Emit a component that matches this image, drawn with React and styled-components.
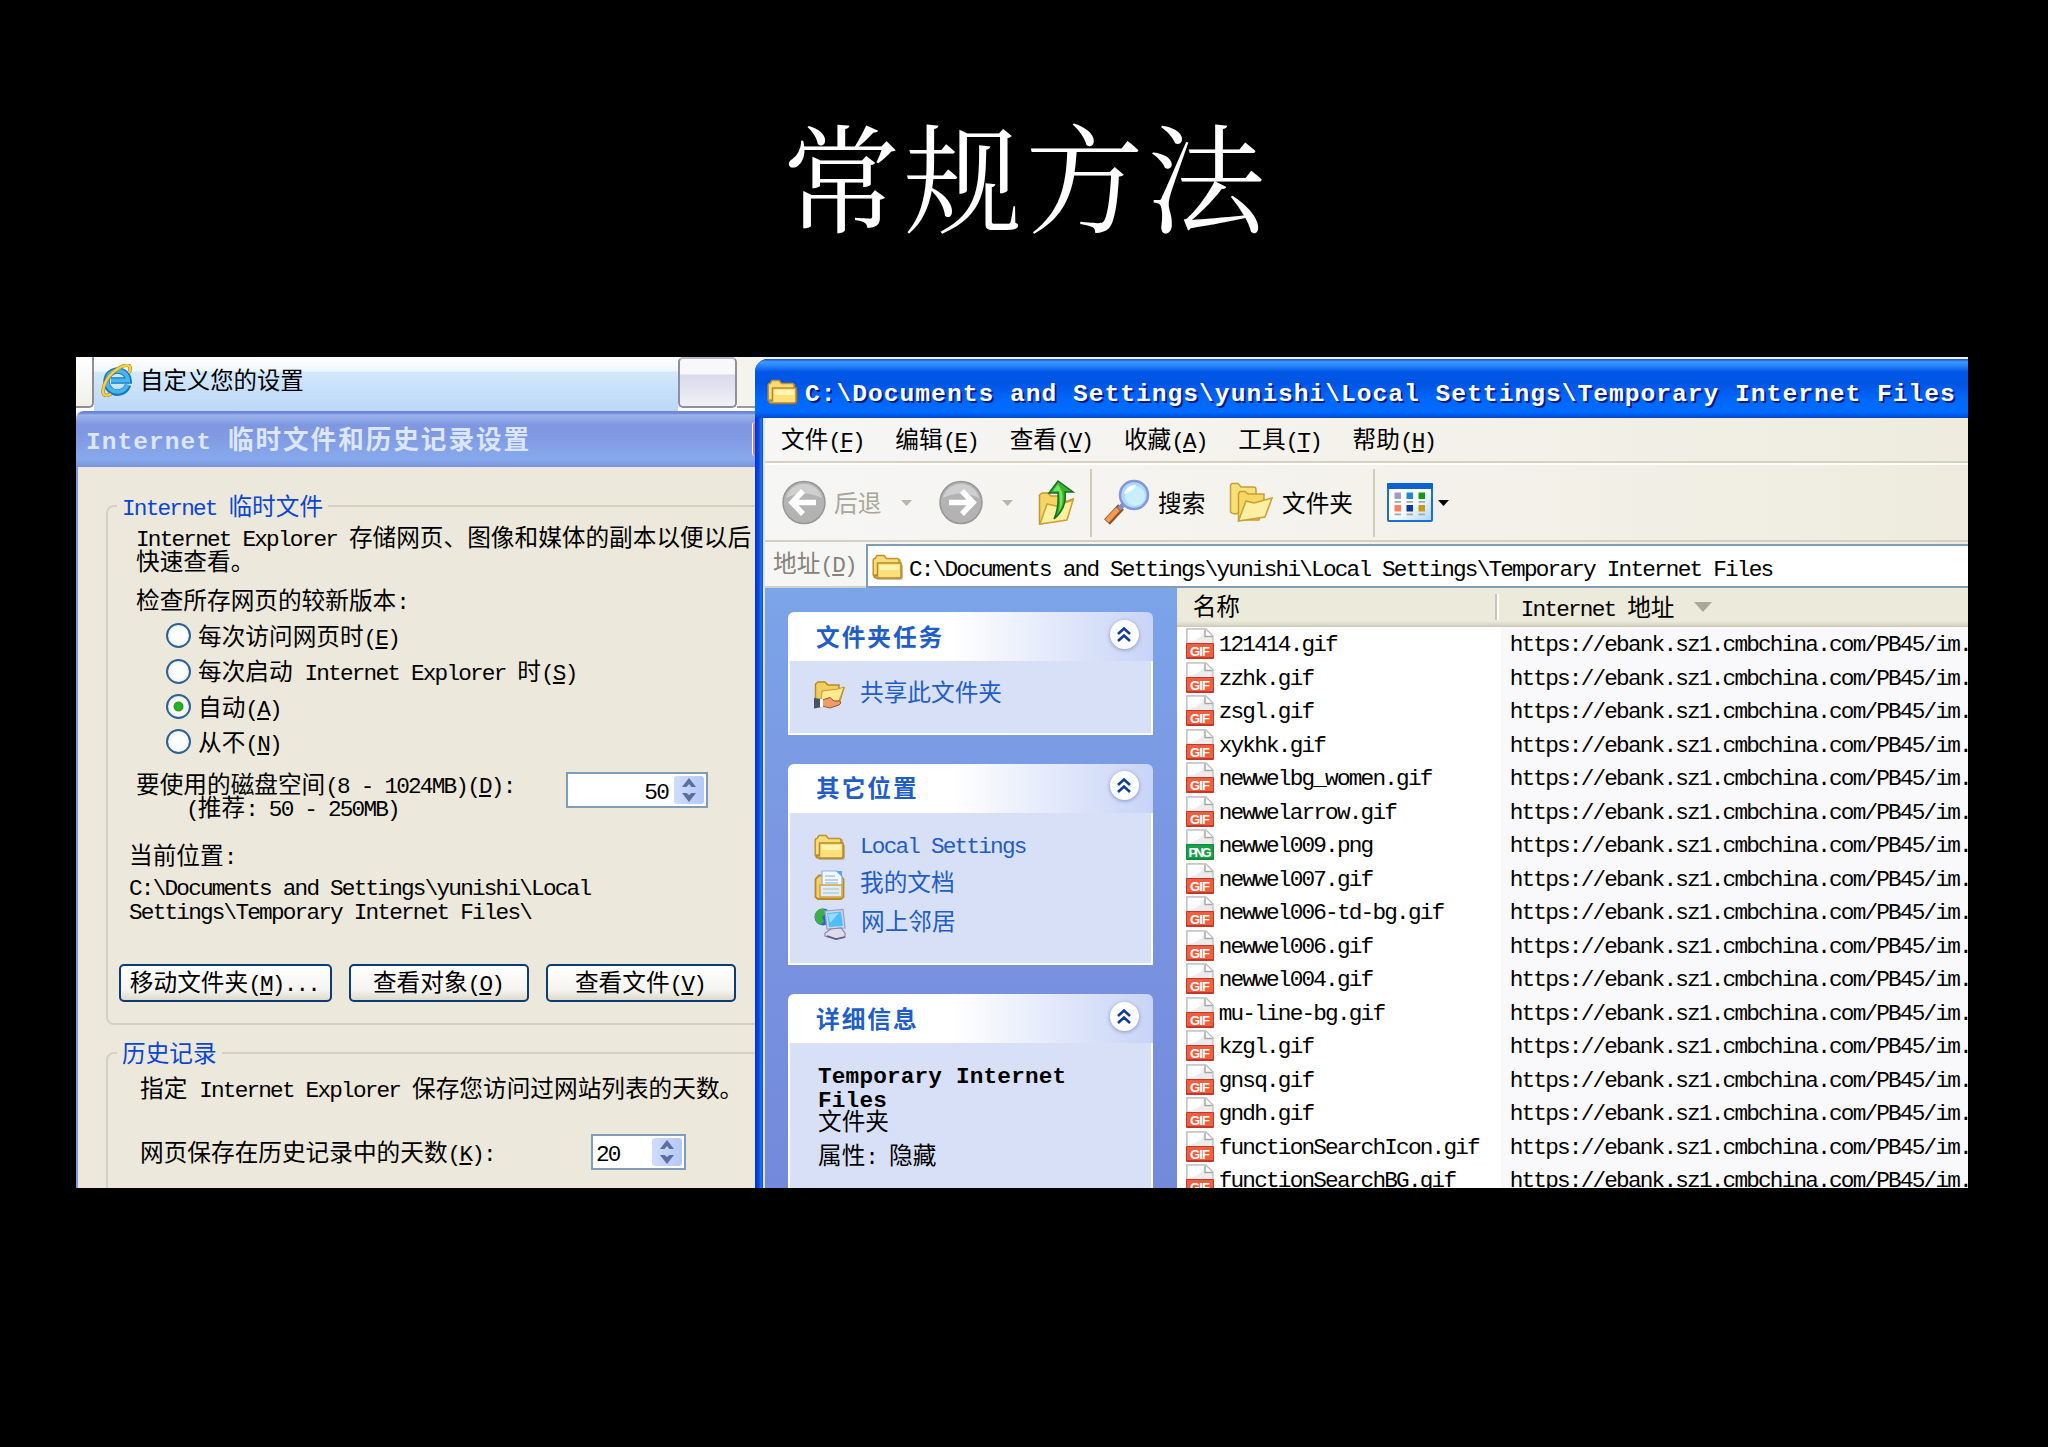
import React from 'react';
import styled, { createGlobalStyle, css } from 'styled-components';

const URL_TEXT = 'https://ebank.sz1.cmbchina.com/PB45/im.';

const files = [
    '121414.gif',
    'zzhk.gif',
    'zsgl.gif',
    'xykhk.gif',
    'newwelbg_women.gif',
    'newwelarrow.gif',
    'newwel009.png',
    'newwel007.gif',
    'newwel006-td-bg.gif',
    'newwel006.gif',
    'newwel004.gif',
    'mu-line-bg.gif',
    'kzgl.gif',
    'gnsq.gif',
    'gndh.gif',
    'functionSearchIcon.gif',
    'functionSearchBG.gif',
];

const menus = ['文件(&F)', '编辑(&E)', '查看(&V)', '收藏(&A)', '工具(&T)', '帮助(&H)'];

const versions = [
    { label: '每次访问网页时(&E)' },
    { label: '每次启动 Internet Explorer 时(&S)' },
    { label: '自动(&A)', checked: true },
    { label: '从不(&N)' },
];

// half-width runs take a fixed advance, "&X" marks the access key
const LATIN = 0.96;

function Txt({ children, size = 23.66, advance = 11.83, bold }) {
    const runs = children.split(/([\x20-\x7e]+)/).filter(Boolean);
    return (
        <>
            {runs.map((run, i) => {
                if (!/^[\x20-\x7e]/.test(run)) return <Cjk key={i} $size={size} $bold={bold}>{run}</Cjk>;
                const [head, tail] = run.split('&');
                return (
                    <Latin key={i} $size={size} $advance={advance} $bold={bold}>
                        {head}{tail && <u>{tail[0]}</u>}{tail && tail.slice(1)}
                    </Latin>
                );
            })}
        </>
    );
}

function FolderIcon({ w = 31, h = 26 }) {
    return (
        <svg width={w} height={h} viewBox="0 0 31 26">
            <path d="M3 23 L1 20 V6 Q1 4 3 4 L5 1.5 H12 L14.500 4 H26 Q28 4 28 6 V10 H30 V23 Q30 25 28 25 H5 Q3 25 3 23Z" fill="#8a6a24" opacity=".55" transform="translate(.8 .8)"/>
            <path d="M1.200 21 V6 Q1.200 4.500 3 4.500 L5 1.500 H12 L14.500 4.500 H25 Q27 4.500 27 6.500 V21Z" fill="#f7dc7c" stroke="#c1912c" strokeWidth="1.500"/>
            <path d="M5.500 9 H29 V22 Q29 24 27 24 H4 Q2 24 2 22 H5.500Z" fill="#fbe07c" stroke="#b98826" strokeWidth="1.500"/>
            <path d="M7.500 11 H27 V16 H7.500Z" fill="#fff3b0"/>
        </svg>
    );
}

function DocsIcon() {
    return (
        <svg width="31" height="30" viewBox="0 0 31 30">
            <path d="M1.500 27 V9 L5 5.500 H26 L29.500 9 V27 L27 29 H4Z" fill="#f3d06a" stroke="#b98a2b" strokeWidth="1.800"/>
            <path d="M8 1 H23 L28 6 V18 H8Z" fill="#f2f8ff" stroke="#8fb0dc" strokeWidth="1.200"/>
            <path d="M22 1 H28 V7Z" fill="#59a7f2"/>
            <path d="M11 6h10M11 10h13M11 13h13" stroke="#a9c4e6" strokeWidth="1.400"/>
            <path d="M6 15 H28 V27 H6Z" fill="#e0edf3" stroke="#d0a544" strokeWidth="1.500"/>
            <path d="M9 19h16M9 23h16" stroke="#a6bfc9" strokeWidth="1.200"/>
        </svg>
    );
}

function NetworkIcon() {
    return (
        <svg width="32" height="32" viewBox="0 0 32 32">
            <circle cx="9" cy="9" r="8.500" fill="#2568c8"/>
            <path d="M1 6 Q4 0 10 1 L13 5 L8 9 L10 14 L6 17 Q0 14 1 6Z" fill="#3fae48"/>
            <path d="M11 3 L29 1.500 L31 20 L13 21Z" fill="#cfd6ee" stroke="#9b9cc0" strokeWidth="1.200"/>
            <path d="M13 5 L27 3.500 L29 18 L15 19Z" fill="#4fbcfb"/>
            <path d="M14 6 L25 5 L16 15Z" fill="#97dcff"/>
            <path d="M17 21 L27 20 L31 25 V29 L22 31.500 L11 28 V25Z" fill="#dcdcec" stroke="#8a86ac" strokeWidth="1.200"/>
            <path d="M13 28 L22 31 L31 29" fill="none" stroke="#5f5a80" strokeWidth="1.500"/>
        </svg>
    );
}

function ShareIcon() {
    return (
        <svg width="31" height="29" viewBox="0 0 31 29">
            <path d="M1.500 21 V3 L4 1 H11 L14 4 H25 V9 L30 7 L25 22 H3Z" fill="#f1cf5d" stroke="#b78a25" strokeWidth="1.500"/>
            <path d="M8 10 L24 8 L30 6 L25 20 L7 21Z" fill="#fdea93" stroke="#c99a2e" strokeWidth="1"/>
            <path d="M8 19 L16 16.500 L20 20 H26 Q28 22 25 24 L16 27 L8 25Z" fill="#ee9d64" stroke="#9c5526" strokeWidth="1"/>
            <path d="M0 17 L8 18 V26 L0 27.500Z" fill="#4a5262"/>
            <path d="M6 18 H9 V26 H6Z" fill="#fff"/>
        </svg>
    );
}

function IeIcon() {
    return (
        <svg width="31" height="33" viewBox="0 0 31 33">
            <path d="M27 21 A11 11 0 1 1 27.500 16.500 H10" fill="none" stroke="#1577c0" strokeWidth="6.500"/>
            <path d="M26.500 20.500 A10.500 10.500 0 1 1 27 16.500 H10" fill="none" stroke="#45b5ee" strokeWidth="4"/>
            <path d="M10 30 Q2 34 2 27 Q3 16 13 7.500 Q24 -1 28.500 2 Q30 4 28 9" fill="none" stroke="#b07d18" strokeWidth="3.600"/>
            <path d="M10 30 Q2 34 2 27 Q3 16 13 7.500 Q24 -1 28.500 2 Q30 4 28 9" fill="none" stroke="#f8cf45" strokeWidth="2.400"/>
        </svg>
    );
}

function RoundArrow({ flip }) {
    return (
        <svg width="44" height="45" viewBox="0 0 44 45">
            <circle cx="22" cy="22.500" r="21" fill="#b3b3b3" stroke="#979797" strokeWidth="1.500"/>
            <path d="M4 18 A18.500 18.500 0 0 1 40 18 Q22 9 4 18Z" fill="#cfcfcf"/>
            <g transform={flip ? 'translate(44 0) scale(-1 1)' : undefined}>
                <path d="M21 11 L10 22.500 L21 34 M11 22.500 H34" fill="none" stroke="#fff" strokeWidth="5.500"/>
            </g>
        </svg>
    );
}

function UpIcon() {
    return (
        <svg width="37" height="46" viewBox="0 0 37 46">
            <path d="M1.500 44 V15 L4 13 H10 L13 16 H27 V22 L35 19 L29 39 Z" fill="#f4d566" stroke="#c2972c" strokeWidth="1.500"/>
            <path d="M2 44 L9 24 L18 26 L35 20 L29 40Z" fill="#fdf0a0" stroke="#cda136" strokeWidth="1.500"/>
            <path d="M20 1 L35 12 H27 Q29 28 16 39 Q21 28 20 13 H11Z" fill="#35b52e" stroke="#15701a" strokeWidth="1.500"/>
            <path d="M20 4 L24 12 Q26 24 21 32 Q23 22 21 11 L15 11Z" fill="#7be066"/>
        </svg>
    );
}

function SearchIcon() {
    return (
        <svg width="46" height="47" viewBox="0 0 46 47">
            <path d="M3 43 L17 28" stroke="#8a4f2c" strokeWidth="8"/>
            <path d="M3 42 L14 30" stroke="#f39a50" strokeWidth="5"/>
            <path d="M15 30 L20 25" stroke="#8d8fa8" strokeWidth="5"/>
            <circle cx="30" cy="16" r="14" fill="#a9dcff" stroke="#8794d6" strokeWidth="2.500"/>
            <circle cx="31" cy="17" r="10" fill="#c9efff"/>
            <path d="M20 15 Q22 6 32 6 Q30 12 20 15Z" fill="#fff"/>
        </svg>
    );
}

function FoldersIcon() {
    return (
        <svg width="44" height="41" viewBox="0 0 44 41">
            <path d="M1.500 30 V3 L3 1.500 H9 L12 5 H25 Q27 5 27 8 V14 L10 31 Q4 33 1.500 30Z" fill="#f8e079" stroke="#c99e35" strokeWidth="1.500"/>
            <path d="M9.500 38 V12 L11 9.500 H16 L19 12 H35 V17 L30 38Z" fill="#f6d766" stroke="#c99e35" strokeWidth="1.500"/>
            <path d="M9.500 39 L17 19 L25 21 L43 16 L36 35 Z" fill="#fdf0a2" stroke="#c99e35" strokeWidth="1.500"/>
        </svg>
    );
}

function ViewsIcon() {
    const cells = ['#a29bc8', '#1f86e0', '#109a10', '#ff7f60', '#0a3a9a', '#c99a10'];
    return (
        <svg width="46" height="39" viewBox="0 0 46 39">
            <defs>
                <linearGradient id="views" x1="0" y1="0" x2="1" y2="1">
                    <stop offset=".5" stopColor="#fff"/>
                    <stop offset="1" stopColor="#a9d6fb"/>
                </linearGradient>
            </defs>
            <rect x="1" y="1" width="44" height="37" rx="1" fill="url(#views)" stroke="#1a70d2" strokeWidth="2"/>
            <rect width="46" height="6" rx="1" fill="#0c62cf"/>
            {cells.map((c, i) => (
                <g key={c} transform={`translate(${7.500 + (i % 3) * 12} ${9.500 + Math.floor(i / 3) * 12.500})`}>
                    <rect width="6.500" height="6.500" fill={c}/>
                    <rect y="8.500" width="6.500" height="1.800" fill="#a7a9ad"/>
                </g>
            ))}
        </svg>
    );
}

function FileIcon({ type }) {
    const png = type === 'png';
    return (
        <svg width="28" height="31" viewBox="0 0 28 31">
            <path d="M.8 30 V.8 H20 L27 8 V30Z" fill="#ececec" stroke="#b9b9b9" strokeWidth="1.200"/>
            <path d="M2 2 H18 Q17 11 2 14Z" fill="#fff"/>
            <path d="M19 1.500 V8.500 H26.500" fill="#fff" stroke="#a6a6a6" strokeWidth="1.400"/>
            <rect y="15" width="28" height="16" rx="1" fill={png ? '#128a3a' : '#c8352a'}/>
            <rect x="1" y="16" width="26" height="13" fill={png ? '#19a04a' : '#ee5f3d'}/>
            <text x="14" y="27.500" textAnchor="middle" textLength={png ? 23 : 20} fontFamily="Liberation Sans, sans-serif" fontWeight="700" fontSize="13" fill="#fff">
                {png ? 'PNG' : 'GIF'}
            </text>
        </svg>
    );
}

function Triangle({ w = 11, h = 6, color = '#b9b6ac' }) {
    return (
        <svg width={w} height={h} viewBox="0 0 10 6" preserveAspectRatio="none">
            <path d="M0 0H10L5 6Z" fill={color}/>
        </svg>
    );
}

function Collapse() {
    return (
        <Round>
            <svg width="16" height="17" viewBox="0 0 16 17">
                <path d="M2 8 L8 2.500 L14 8 M2 15 L8 9.500 L14 15" fill="none" stroke="#113c9c" strokeWidth="2.600"/>
            </svg>
        </Round>
    );
}

function Spinner({ value, width, align }) {
    return (
        <SpinBox $width={width}>
            <SpinValue $align={align}><Txt>{value}</Txt></SpinValue>
            <SpinArrows>
                <svg width="14" height="24" viewBox="0 0 14 24">
                    <path d="M0 9 L7 0 L14 9 H9.500 L7 6 L4.500 9Z M0 15 L7 24 L14 15 H9.500 L7 17 L4.500 15Z" fill="#5a6f9f"/>
                </svg>
            </SpinArrows>
        </SpinBox>
    );
}

function TaskBox({ title, children, height, gap }) {
    return (
        <Task $height={height} $gap={gap}>
            <TaskHead><Txt bold>{title}</Txt><Collapse/></TaskHead>
            <TaskBody>{children}</TaskBody>
        </Task>
    );
}

function SettingsDialog() {
    return (
        <Left>
            <TabStrip>
                <TabEnd/>
                <ActiveTab><IeIcon/><span><Txt size={23.4}>自定义您的设置</Txt></span></ActiveTab>
                <NewTab/>
                <TabRest/>
            </TabStrip>
            <DialogTitle>
                <span><Txt bold size={25.6} advance={15.77}>Internet 临时文件和历史记录设置</Txt></span>
                <CloseEdge/>
            </DialogTitle>
            <DialogBody>
                <Group $top={26} $height={532}>
                    <legend><Txt>Internet 临时文件</Txt></legend>
                    <Line $top={6} $left={28}><Txt>Internet Explorer 存储网页、图像和媒体的副本以便以后</Txt></Line>
                    <Line $left={28}><Txt>快速查看。</Txt></Line>
                    <Line $top={16} $left={28}><Txt>检查所存网页的较新版本:</Txt></Line>
                    <Radios>
                        {versions.map(v => (
                            <RadioRow key={v.label}><Dot $checked={v.checked}/><span><Txt>{v.label}</Txt></span></RadioRow>
                        ))}
                    </Radios>
                    <DiskRow>
                        <div>
                            <Line><Txt>要使用的磁盘空间(8 - 1024MB)(&D):</Txt></Line>
                            <Line $left={50}><Txt>(推荐: 50 - 250MB)</Txt></Line>
                        </div>
                        <Spinner value="50" width={142} align="right"/>
                    </DiskRow>
                    <Line $top={23} $left={21}><Txt>当前位置:</Txt></Line>
                    <Line $top={8} $left={21}><Txt>C:\Documents and Settings\yunishi\Local</Txt></Line>
                    <Line $left={21}><Txt>Settings\Temporary Internet Files\</Txt></Line>
                    <Buttons>
                        <Button $width={213}><Txt>移动文件夹(&M)...</Txt></Button>
                        <Button $width={180}><Txt>查看对象(&O)</Txt></Button>
                        <Button $width={190}><Txt>查看文件(&V)</Txt></Button>
                    </Buttons>
                </Group>
                <Group $top={15} $height={220}>
                    <legend><Txt>历史记录</Txt></legend>
                    <Line $top={10} $left={32}><Txt>指定 Internet Explorer 保存您访问过网站列表的天数。</Txt></Line>
                    <DaysRow>
                        <Line><Txt>网页保存在历史记录中的天数(&K):</Txt></Line>
                        <Spinner value="20" width={95} align="left"/>
                    </DaysRow>
                </Group>
            </DialogBody>
        </Left>
    );
}

function Explorer() {
    return (
        <Window>
            <Caption>
                <FolderIcon/>
                <span><Txt bold size={25.6} advance={15.77}>C:\Documents and Settings\yunishi\Local Settings\Temporary Internet Files</Txt></span>
            </Caption>
            <Inner>
                <MenuBar>{menus.map(m => <span key={m}><Txt>{m}</Txt></span>)}</MenuBar>
                <Toolbar>
                    <Tool $w={52} $dim><RoundArrow/></Tool>
                    <Tool $w={67} $dim><span><Txt>后退</Txt></span></Tool>
                    <Tool $w={38}><Triangle/></Tool>
                    <Tool $w={63}><RoundArrow flip/></Tool>
                    <Tool $w={36}><Triangle/></Tool>
                    <Tool $w={52}><UpIcon/></Tool>
                    <Separator/>
                    <Tool $w={54}><SearchIcon/></Tool>
                    <Tool $w={71}><span><Txt>搜索</Txt></span></Tool>
                    <Tool $w={53}><FoldersIcon/></Tool>
                    <Tool $w={91}><span><Txt>文件夹</Txt></span></Tool>
                    <Separator/>
                    <Tool $w={51}><ViewsIcon/></Tool>
                    <Tool><Triangle color="#000"/></Tool>
                </Toolbar>
                <AddressBar>
                    <AddressLabel><Txt>地址(&D)</Txt></AddressLabel>
                    <AddressField>
                        <FolderIcon w={33}/>
                        <span><Txt>C:\Documents and Settings\yunishi\Local Settings\Temporary Internet Files</Txt></span>
                    </AddressField>
                </AddressBar>
                <Content>
                    <Sidebar>
                        <TaskBox title="文件夹任务" height={122.5} gap={29}>
                            <TaskLink><ShareIcon/><span><Txt>共享此文件夹</Txt></span></TaskLink>
                        </TaskBox>
                        <TaskBox title="其它位置" height={201} gap={29.5}>
                            <TaskLink><FolderIcon/><span><Txt>Local Settings</Txt></span></TaskLink>
                            <TaskLink><DocsIcon/><span><Txt>我的文档</Txt></span></TaskLink>
                            <TaskLink><NetworkIcon/><span><Txt>网上邻居</Txt></span></TaskLink>
                        </TaskBox>
                        <TaskBox title="详细信息" height={240}>
                            <Details>
                                <Line><Txt bold advance={13.8}>Temporary Internet</Txt></Line>
                                <Line><Txt bold advance={13.8}>Files</Txt></Line>
                                <Line><Txt>文件夹</Txt></Line>
                                <Line $top={10}><Txt>属性: 隐藏</Txt></Line>
                            </Details>
                        </TaskBox>
                    </Sidebar>
                    <List>
                        <ListHead>
                            <HeadName><Txt>名称</Txt></HeadName>
                            <HeadUrl><span><Txt>Internet 地址</Txt></span><Triangle w={18} h={10} color="#aca899"/></HeadUrl>
                        </ListHead>
                        {files.map(name => (
                            <Row key={name}>
                                <NameCell><FileIcon type={name.slice(-3)}/><FileName><Txt>{name}</Txt></FileName></NameCell>
                                <UrlCell><Txt>{URL_TEXT}</Txt></UrlCell>
                            </Row>
                        ))}
                    </List>
                </Content>
            </Inner>
        </Window>
    );
}

export default function App() {
    return (
        <Slide>
            <GlobalStyle/>
            <Title>常规方法</Title>
            <Shot>
                <SettingsDialog/>
                <Explorer/>
            </Shot>
        </Slide>
    );
}

const GlobalStyle = createGlobalStyle`
    * {
        box-sizing: border-box;
    }

    body {
        margin: 0;
        background: #000;
    }

    svg {
        display: block;
        flex: none;
    }
`

const Cjk = styled.span`
    font-family: 'Noto Sans CJK SC', sans-serif;
    font-size: ${p => p.$size}px;
    font-weight: ${p => p.$bold ? 700 : 400};
    letter-spacing: ${p => p.$bold ? 1.97 : 0}px;
`

const Latin = styled.span`
    font-family: 'Liberation Mono', monospace;
    font-size: ${p => p.$size * LATIN}px;
    font-weight: ${p => p.$bold ? 700 : 400};
    letter-spacing: ${p => p.$advance - p.$size * LATIN * 0.6}px;
    line-height: 0;

    u {
        text-decoration-thickness: 2px;
        text-underline-offset: 2px;
    }
`

const Slide = styled.div`
    width: 2048px;
    height: 1447px;
    background: #000;
    overflow: hidden;
    font-family: 'Noto Sans CJK SC', sans-serif;
    font-size: 23.66px;
    line-height: 23.66px;
    white-space: pre;
    color: #000;
`

const Title = styled.h1`
    height: 357px;
    margin: 0;
    padding: 108px 0 0 3px;
    font-family: 'Noto Serif CJK SC', 'Noto Sans CJK SC', serif;
    font-size: 118px;
    line-height: 130px;
    font-weight: 400;
    letter-spacing: 3.500px;
    text-align: center;
    color: #fff;
`

const Shot = styled.div`
    display: flex;
    width: 1892px;
    height: 831px;
    margin-left: 76px;
    background: #f4f3ee;
    overflow: hidden;
`

const Left = styled.div`
    width: 679px;
    overflow: hidden;
`

const TabStrip = styled.div`
    display: flex;
    height: 54px;
    background: #fff;
`

const TabEnd = styled.div`
    width: 18px;
    height: 51px;
    background: linear-gradient(#fff, #f1f0e8);
    border: solid #8d8f93;
    border-width: 0 2px 2px 0;
    border-bottom-right-radius: 5px;
`

const ActiveTab = styled.div`
    display: flex;
    align-items: center;
    gap: 8px;
    width: 584px;
    padding: 0 0 8px 7px;
    background: linear-gradient(#fff, #eef7fe 14px, #d2e8fb 15px, #bcd7f8);
`

const NewTab = styled.div`
    width: 59px;
    height: 51px;
    border: 2px solid #8d8fa3;
    border-top-color: #b9bac4;
    border-radius: 5px;
    background: linear-gradient(#f8f8fb 15px, #d9daea 16px, #f1f1f8);
`

const TabRest = styled.div`
    flex: 1;
    height: 51px;
    background: #f4f3ec;
    border-bottom: 2px solid #9a9a98;
`

const DialogTitle = styled.div`
    display: flex;
    justify-content: space-between;
    align-items: center;
    height: 56px;
    padding-left: 10px;
    border-top-left-radius: 8px;
    background: linear-gradient(#6d86dc, #6d86dc 2px, #9db4ec 4px, #7e97e0 14px, #8099e2 24px, #88a9ec 48px, #7b95df);
    color: #dbe6fb;
`

const CloseEdge = styled.div`
    width: 3px;
    height: 34px;
    border-radius: 4px 0 0 4px;
    background: #c77f9f;
    border-left: 1px solid #fff;
`

const DialogBody = styled.div`
    height: 721px;
    padding-left: 28px;
    overflow: hidden;
    border-left: 2px solid #7f97dd;
    background: #ece9dc;
`

const Group = styled.fieldset`
    width: 680px;
    height: ${p => p.$height}px;
    margin: ${p => p.$top}px 0 0;
    padding: 0;
    border: 2px solid #d3d1c0;
    border-radius: 8px;

    legend {
        height: 26px;
        margin-left: 9px;
        padding: 0 5px;
        line-height: 25px;
        color: #0a46d5;
    }
`

const Line = styled.div`
    height: 23.66px;
    margin: ${p => p.$top || 0}px 0 0 ${p => p.$left || 0}px;
`

const Radios = styled.div`
    margin: 6px 0 0 58px;
`

const RadioRow = styled.div`
    display: flex;
    align-items: center;
    gap: 7px;
    height: 35.4px;
`

const Dot = styled.span`
    width: 25px;
    height: 25px;
    border: 2px solid #2a6292;
    border-radius: 50%;
    background: radial-gradient(#fff 40%, #e4e3dd);

    ${p => p.$checked && css`
        background: radial-gradient(circle, #2fb82c 0, #27a325 4.500px, #fff 5.500px, #eee 10px);
    `}
`

const DiskRow = styled.div`
    display: flex;
    justify-content: space-between;
    height: 48px;
    width: 572px;
    margin: 12px 0 0 28px;
`

const DaysRow = styled.div`
    display: flex;
    justify-content: space-between;
    align-items: center;
    width: 546px;
    margin: 34px 0 0 32px;
`

const SpinBox = styled.div`
    display: flex;
    align-items: center;
    width: ${p => p.$width}px;
    height: 36px;
    padding-right: 2px;
    border: 2px solid #7f9db9;
    background: #fff;
`

const SpinValue = styled.div`
    flex: 1;
    padding: 0 6px 0 3px;
    text-align: ${p => p.$align};
`

const SpinArrows = styled.div`
    display: flex;
    align-items: center;
    justify-content: center;
    width: 30px;
    height: 28px;
    border-radius: 3px;
    background: linear-gradient(90deg, #cfdcfd, #b5c8f6);
`

const Buttons = styled.div`
    display: flex;
    gap: 17px;
    margin: 42px 0 0 11px;
`

const Button = styled.div`
    width: ${p => p.$width}px;
    height: 38px;
    padding: 4px 2px 0 0;
    border: 2px solid #0b3c74;
    border-radius: 5px;
    background: linear-gradient(#fff, #f5f4f0 70%, #dddacb);
    text-align: center;
`

const Window = styled.div`
    width: 1213px;
    height: 829px;
    margin-top: 2px;
    border-top-left-radius: 13px;
    background: linear-gradient(90deg, #0831c8, #0a4be0 4px, #1f76f4 6px, #0c48d0 8px);
    overflow: hidden;
`

const Caption = styled.div`
    display: flex;
    align-items: center;
    gap: 7px;
    height: 59px;
    padding: 6px 0 0 12px;
    background: linear-gradient(#0c55d8, #3f97ff 3px, #2f88fb 6px, #0058e8 13px, #0054e2 24px, #0069fd 42px, #006cff 53px, #0047cf);
    color: #fff;
    text-shadow: 2px 2px 0 #0a1c80;
`

const Inner = styled.div`
    margin-left: 8px;
    border-left: 2px solid #dfe8fb;
    background: linear-gradient(90deg, #f6f6f5, #f3f1e9 60%, #eeebde);
`

const MenuBar = styled.div`
    display: flex;
    align-items: center;
    gap: 31.5px;
    height: 45px;
    padding: 0 0 2px 16px;
    border-bottom: 2px solid #d5d2c2;
`

const Toolbar = styled.div`
    display: flex;
    align-items: center;
    height: 79px;
    padding-left: 17px;
    border-top: 2px solid #fdfdfb;
    border-bottom: 2px solid #d3d1c0;
`

const Tool = styled.div`
    flex: none;
    width: ${p => p.$w ? p.$w + 'px' : 'auto'};
    color: ${p => p.$dim ? '#a9a79c' : '#000'};
`

const Separator = styled.div`
    width: 2px;
    height: 68px;
    margin-right: 12px;
    background: #cfccb8;
`

const AddressBar = styled.div`
    display: flex;
    height: 46px;
`

const AddressLabel = styled.div`
    width: 101px;
    padding: 9px 0 0 8px;
    color: #85837a;
    border-bottom: 2px solid #d3d1c0;
`

const AddressField = styled.div`
    display: flex;
    align-items: center;
    gap: 5px;
    flex: 1;
    margin-top: 2px;
    padding: 2px 0 0 3px;
    border: solid #7f9db9;
    border-width: 2px 0 2px 2px;
    background: #fff;
`

const Content = styled.div`
    display: flex;
    height: 600px;
`

const Sidebar = styled.div`
    width: 412px;
    padding: 24px 24px 0 23px;
    background: linear-gradient(#7ba4e9, #7b96e2 45%, #7389db);
`

const Task = styled.div`
    height: ${p => p.$height}px;
    margin-bottom: ${p => p.$gap || 0}px;
    border-radius: 6px 6px 0 0;
    overflow: hidden;
`

const TaskHead = styled.div`
    display: flex;
    align-items: center;
    height: 49px;
    padding: 0 14px 0 28px;
    background: linear-gradient(90deg, #fff 45%, #c8d4f7);
    color: #215dc6;
`

const Round = styled.div`
    display: flex;
    align-items: center;
    justify-content: center;
    width: 29px;
    height: 29px;
    margin: -5px 0 0 auto;
    border-radius: 50%;
    background: #fff;
    box-shadow: 0 1px 4px #8d95c0;
`

const TaskBody = styled.div`
    height: calc(100% - 49px);
    padding: 12px 0 0 24px;
    border: 2px solid #fdfdff;
    border-top: 0;
    background: #d8e0f8;
`

const TaskLink = styled.div`
    display: flex;
    align-items: center;
    gap: 15px;
    height: 38.5px;
    color: #215dc6;

    svg {
        margin-top: 6px;
    }
`

const Details = styled.div`
    padding: 7px 0 0 4px;
`

const List = styled.div`
    width: 792px;
    overflow: hidden;
    background: linear-gradient(90deg, #fff 324px, #f9f8fb 324px);
`

const ListHead = styled.div`
    display: flex;
    height: 39px;
    background: linear-gradient(#ebeadb 33px, #d9d6c6 37px, #c9c6b4);
`

const HeadName = styled.div`
    width: 320px;
    height: 26px;
    margin-top: 6px;
    padding-left: 16px;
    border-right: 2px solid #c9c6b5;
`

const HeadUrl = styled.div`
    display: flex;
    gap: 20px;
    align-items: center;
    height: 26px;
    margin-top: 6px;
    padding-left: 22px;
    border-left: 2px solid #fff;
`

const Row = styled.div`
    display: flex;
    height: 33.5px;
`

const NameCell = styled.div`
    display: flex;
    flex: none;
    align-items: flex-start;
    gap: 5px;
    width: 333px;
    padding: 1px 0 0 9px;
`

const FileName = styled.span`
    padding-top: 2px;
`

const UrlCell = styled.div`
    padding-top: 3px;
`
